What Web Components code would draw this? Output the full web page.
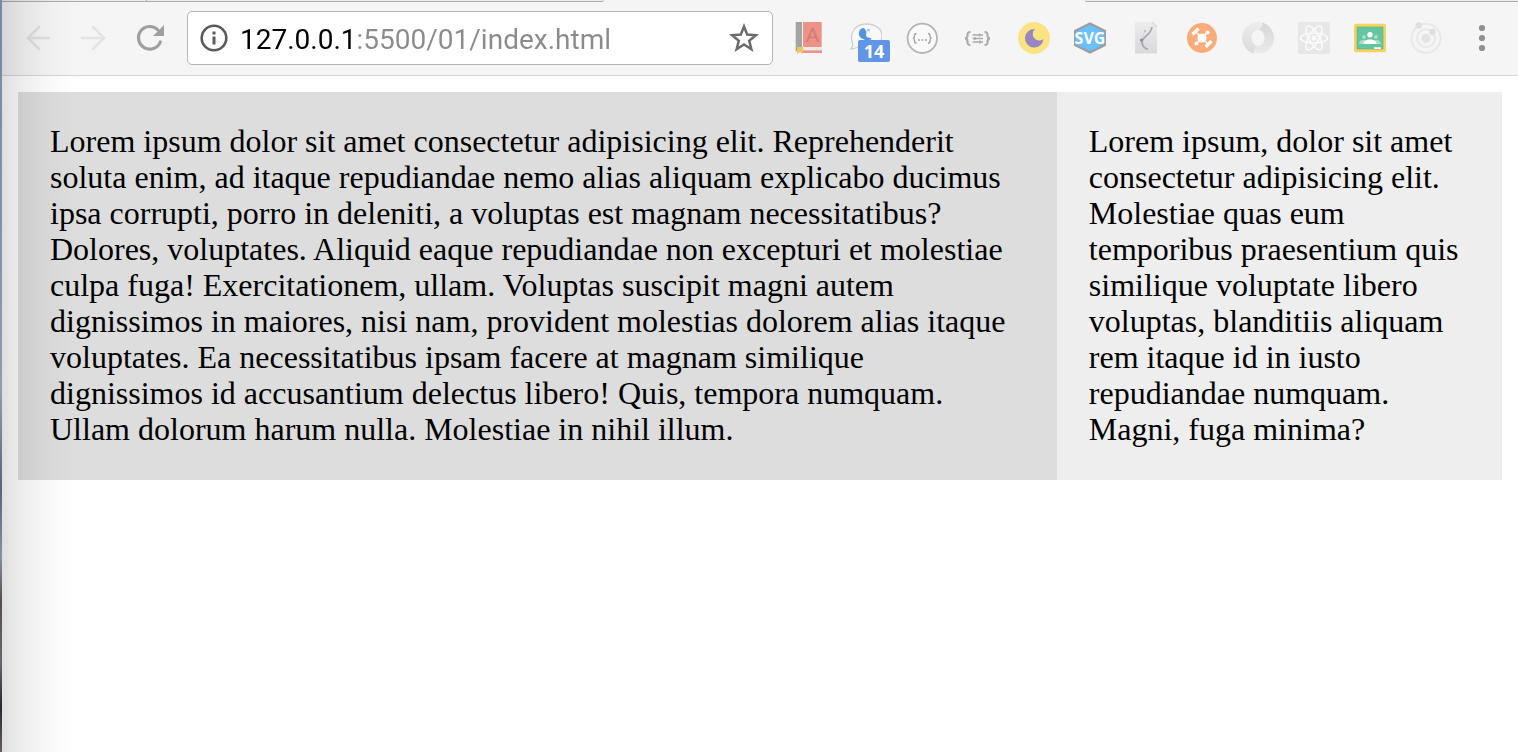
<!DOCTYPE html>
<html lang="en">
<head>
<meta charset="utf-8">
<meta name="viewport" content="width=device-width, initial-scale=1">
<title>127.0.0.1:5500/01/index.html</title>
<style>
  body { margin: 0; background: #fff; }
</style>
</head>
<body>
<browser-window>
  <tab-edge slot="tabs"></tab-edge>
  <browser-toolbar slot="toolbar">
    <tool-button slot="nav" label="Back"><svg viewBox="0 0 32 32"><path d="M27 16H7M17 5L6 16l11 11" fill="none" stroke="#e0e0e0" stroke-width="2.6" stroke-linecap="round"/></svg></tool-button>
    <tool-button slot="nav" label="Forward"><svg viewBox="0 0 32 32"><path d="M4 16h20M15 5l11 11-11 11" fill="none" stroke="#e4e4e4" stroke-width="2.6" stroke-linecap="round"/></svg></tool-button>
    <tool-button slot="nav" label="Reload"><svg viewBox="0 0 32 32"><path d="M26.300 20A11.300 11.300 0 1 1 24 8" fill="none" stroke="#9f9f9f" stroke-width="3.200" stroke-linecap="round"/><path d="M30 3v11H19z" fill="#9f9f9f"/></svg></tool-button>
    <address-bar slot="address" value="127.0.0.1:5500/01/index.html"></address-bar>

    <tool-button label="Dictionary"><svg viewBox="0 0 32 32"><path d="M9 0h18.700v25H9z" fill="#ee9186"/><path d="M1.700 0H8v25l-6.300 5z" fill="#a3a3a3"/><path d="M8 25h20v3H8z" fill="#e9eaec"/><path d="M7 28.300h21V31H7z" fill="#ee9186"/><path d="M3 25h6v7l-3-2-3 2z" fill="#f0c55b"/><text x="18.500" y="20" text-anchor="middle" font-family="Liberation Sans, sans-serif" font-size="20" fill="#cf7d76">A</text></svg></tool-button>
    <tool-button label="Messages" badge="14"><svg viewBox="0 0 32 32"><path d="M1 27c2-2 2-4 1.500-6C-1 11 5 2 16 2s16 6 16 12-6 12-15 12c-4 0-6-1-9-1-2 1-4 2-7 2z" fill="#f8f8f8" stroke="#cfcfcf" stroke-width="1.300"/><path d="M13 6c-5 1-6 9 0 11 2 1 4 2 5 4l1-3c2 0 3-1 2-2-3 0-5-1-5-3s1-3 0-4-1-3-3-3z" fill="#5294df"/><circle cx="18.500" cy="8" r="1.600" fill="#a9c7ea"/></svg></tool-button>
    <tool-button label="JSON formatter"><svg viewBox="0 0 32 32"><circle cx="16.300" cy="16.300" r="14.700" fill="#fafafa" stroke="#b4b4b4" stroke-width="1.800"/><path d="M10.500 11.500c-2 0-2 1-2 2.500s0 2-1.500 2.300c1.500.3 1.500 1 1.500 2.500s0 2.500 2 2.500M22 11.500c2 0 2 1 2 2.500s0 2 1.500 2.300c-1.500.3-1.500 1-1.500 2.500s0 2.500-2 2.500" fill="none" stroke="#a6a6a6" stroke-width="1.400"/><path d="M12 18h2M15.500 18h2M19 18h2" stroke="#a6a6a6" stroke-width="1.700"/></svg></tool-button>
    <tool-button label="JSON editor"><svg viewBox="0 0 32 32"><path d="M8.500 10c-3 0-3 1-3 3s0 3.300-2.500 3.300C5.500 16.300 5.500 18 5.500 20s0 3 3 3M22.500 10c3 0 3 1 3 3s0 3.300 2.500 3.300c-2.500 0-2.500 1.700-2.500 3.700s0 3-3 3" fill="none" stroke="#ababab" stroke-width="2.200"/><path d="M10.500 13h10.500M10.500 16.500h10.500M10.500 20h10.500" stroke="#ababab" stroke-width="1.500"/><path d="M17.500 11.500v3M13 15v3M18 18.500v3" stroke="#ababab" stroke-width="1.500"/></svg></tool-button>
    <tool-button label="Night mode"><svg viewBox="0 0 32 32"><circle cx="16" cy="16" r="16" fill="#fbe384"/><path d="M17 7A9.300 9.300 0 1 0 25.500 17 6 6 0 1 1 17 7z" fill="#9588c0"/></svg></tool-button>
    <tool-button label="SVG tools"><svg viewBox="0 0 32 32"><path d="M16 1.500L31 9v14L16 30.500 1 23V9z" fill="#68c1fb" stroke="#9d9d9d" stroke-width="2.400"/><path d="M1 9v14M31 9v14" stroke="#8ca5b5" stroke-width="1.500"/><text x="16" y="22" text-anchor="middle" font-family="Open Sans, sans-serif" font-weight="700" font-size="16" fill="#fff">SVG</text></svg></tool-button>
    <tool-button label="Vector editor"><svg viewBox="0 0 32 32"><defs><linearGradient id="sheet" x1="0" y1="0" x2="0" y2="1"><stop offset="0" stop-color="#ececee"/><stop offset="1" stop-color="#dad8dd"/></linearGradient></defs><path d="M5 0h18l4 4v27.500H5z" fill="url(#sheet)"/><path d="M22 0c2 2 1 5 5 4z" fill="#f7f7f7" stroke="#cfcfd2" stroke-width=".7"/><path d="M22 5c-1 8-10 10-10 15 0 4 3 7 6 7" fill="none" stroke="#aaa8aa" stroke-width="1.800"/><path d="M10 21l5-12" stroke="#cbd0dd" stroke-width=".8"/><circle cx="15" cy="9" r="1" fill="#9fb8df"/><circle cx="11.500" cy="18" r="1.600" fill="#908d90"/></svg></tool-button>
    <tool-button label="Drone"><svg viewBox="0 0 32 32"><circle cx="16" cy="16" r="15" fill="#f9ab79"/><path d="M9 9l14 14M21.500 10.500l-11 11" stroke="#fff" stroke-width="1.500"/><circle cx="16" cy="16" r="4.600" fill="#fff"/><path d="M6.500 12.500l6-6M19.500 25l6-6" stroke="#fff" stroke-width="3.400"/><circle cx="21.500" cy="10.500" r="2" fill="#fff"/><circle cx="10.500" cy="21.500" r="2" fill="#fff"/></svg></tool-button>
    <tool-button label="JSON viewer"><svg viewBox="0 0 32 32"><defs><linearGradient id="ringA" x1="0" y1="0" x2="0" y2="1"><stop offset="0" stop-color="#ededed"/><stop offset="1" stop-color="#dadada"/></linearGradient><linearGradient id="ringB" x1="0" y1="0" x2="0" y2="1"><stop offset="0" stop-color="#d6d6d6"/><stop offset="1" stop-color="#ebebeb"/></linearGradient></defs><path d="M12 31.500A16 16 0 0 1 16 0q4 1 4 5-1 3-4 3a6.500 8 0 0 0 0 16q-5 2-4 7.500z" fill="url(#ringA)"/><path d="M20 .5A16 16 0 0 1 16 32q-4-1-4-5 1-3 4-3a6.500 8 0 0 0 0-16q5-2 4-7.500z" fill="url(#ringB)"/></svg></tool-button>
    <tool-button label="React developer tools"><svg viewBox="0 0 32 32"><rect width="32" height="32" rx="2" fill="#e7e7e7"/><g fill="none" stroke="#fafafa" stroke-width="1.700"><ellipse cx="16" cy="16" rx="13.500" ry="5"/><ellipse cx="16" cy="16" rx="13.500" ry="5" transform="rotate(60 16 16)"/><ellipse cx="16" cy="16" rx="13.500" ry="5" transform="rotate(120 16 16)"/></g><circle cx="16" cy="16" r="2.500" fill="#fafafa"/></svg></tool-button>
    <tool-button label="Classroom"><svg viewBox="0 0 32 32"><rect y="1.700" width="32" height="28.600" rx="2" fill="#f8d15f"/><path d="M3 5h26v22H3z" fill="#63c6a0"/><path d="M3 5h26v22H3z" fill="none" stroke="#5cb28d" stroke-width=".6"/><circle cx="16" cy="12.700" r="2.700" fill="#fff"/><circle cx="10" cy="15" r="1.900" fill="#a9dfc9"/><circle cx="22" cy="15" r="1.900" fill="#a9dfc9"/><path d="M5 22c0-3 2-4 5-4h12c3 0 5 1 5 4z" fill="#a9dfc9"/><path d="M9.500 22c0-3 3-4.500 6.500-4.500s6.500 1.500 6.500 4.500z" fill="#fff"/><path d="M20 25.300h7V27h-7z" fill="#fff"/></svg></tool-button>
    <tool-button label="Orbit"><svg viewBox="0 0 32 32"><g fill="none" stroke="#e8e8e8" stroke-width="2"><circle cx="16" cy="16.300" r="14.500"/><circle cx="16" cy="16.300" r="9"/></g><circle cx="16" cy="16.300" r="4.500" fill="#e3e3e3"/><circle cx="8.700" cy="3.500" r="3.200" fill="#dfdfdf"/><circle cx="22.500" cy="10" r="3.200" fill="#dfdfdf"/></svg></tool-button>
    <tool-button label="Menu"><svg viewBox="0 0 32 32" fill="#909090"><circle cx="16" cy="6" r="3.100"/><circle cx="16" cy="16" r="3.100"/><circle cx="16" cy="26" r="3.100"/></svg></tool-button>
  </browser-toolbar>

  <split-layout>
    <text-panel>Lorem ipsum dolor sit amet consectetur adipisicing elit. Reprehenderit soluta enim, ad itaque repudiandae nemo alias aliquam explicabo ducimus ipsa corrupti, porro in deleniti, a voluptas est magnam necessitatibus? Dolores, voluptates. Aliquid eaque repudiandae non excepturi et molestiae culpa fuga! Exercitationem, ullam. Voluptas suscipit magni autem dignissimos in maiores, nisi nam, provident molestias dolorem alias itaque voluptates. Ea necessitatibus ipsam facere at magnam similique dignissimos id accusantium delectus libero! Quis, tempora numquam. Ullam dolorum harum nulla. Molestiae in nihil illum.</text-panel>
    <text-panel tone="light">Lorem ipsum, dolor sit amet consectetur adipisicing elit. Molestiae quas eum temporibus praesentium quis similique voluptate libero voluptas, blanditiis aliquam rem itaque id in iusto repudiandae numquam. Magni, fuga minima?</text-panel>
  </split-layout>
</browser-window>

<script>
  const shadow = (host, html) => { host.attachShadow({ mode: 'open' }).innerHTML = html; };

  customElements.define('browser-window', class extends HTMLElement {
    constructor() {
      super();
      shadow(this, `
        <style>
          :host { display: flex; min-height: 100vh; position: relative; background: #fff; }
          .desktop { flex: none; width: 2px; background: linear-gradient(#7288a3 0, #8495ab 35%, #909cab 52%, #5a6478 65%, #8790a0 74%, #574b50 80%, #69666f 88%, #2b2833 94%, #675c60 100%); }
          .window { flex: 1; min-width: 0; display: flex; flex-direction: column; position: relative; }
          .window::after { content: ""; position: absolute; inset: 0 auto 0 0; width: 76px; pointer-events: none;
            background: linear-gradient(90deg, rgba(0,0,0,.13), rgba(0,0,0,.08) 22%, rgba(0,0,0,.03) 55%, rgba(0,0,0,.01) 80%, transparent); }
          main { padding: 16px; }
        </style>
        <div class="desktop"></div>
        <div class="window">
          <slot name="tabs"></slot>
          <slot name="toolbar"></slot>
          <main><slot></slot></main>
        </div>`);
    }
  });

  customElements.define('tab-edge', class extends HTMLElement {
    constructor() {
      super();
      shadow(this, `
        <style>
          :host { display: flex; height: 2px; background: #f5f5f5; }
          i { box-sizing: border-box; background: #ececec; border-bottom: 1px solid #acacac; }
          .first { flex: 144; border-right: 1px solid #acacac; }
          .second { flex: 457; border-bottom-right-radius: 2px; }
          .active { flex: 482; background: none; border: 0; }
          .rest { flex: 433; border-bottom-left-radius: 2px; }
        </style>
        <i class="first"></i><i class="second"></i><i class="active"></i><i class="rest"></i>`);
    }
  });

  customElements.define('browser-toolbar', class extends HTMLElement {
    constructor() {
      super();
      shadow(this, `
        <style>
          :host { display: flex; align-items: center; gap: 9px; box-sizing: border-box; height: 74px; padding: 0 8px 2px; background: #f5f5f5; border-bottom: 1px solid #d6d6d6; }
          nav, .tools { display: flex; flex: none; }
          .address { flex: 1; min-width: 0; }
        </style>
        <nav><slot name="nav"></slot></nav>
        <div class="address"><slot name="address"></slot></div>
        <div class="tools"><slot></slot></div>`);
    }
  });

  customElements.define('tool-button', class extends HTMLElement {
    constructor() {
      super();
      shadow(this, `
        <style>
          :host { display: block; width: 56px; }
          button { display: flex; justify-content: center; align-items: center; position: relative; width: 100%; height: 48px; margin: 0; padding: 0; border: 0; background: none; }
          ::slotted(svg) { display: block; width: 32px; height: 32px; }
          .badge { position: absolute; left: 20px; top: 26px; width: 32px; height: 22px; border-radius: 2px; background: #6095e7; color: #fff; font: 700 18px/22px "Open Sans", sans-serif; text-align: center; }
          .badge:empty { display: none; }
        </style>
        <button type="button"><slot></slot><span class="badge"></span></button>`);
    }
    connectedCallback() {
      this.shadowRoot.querySelector('button').setAttribute('aria-label', this.getAttribute('label'));
      this.shadowRoot.querySelector('.badge').textContent = this.getAttribute('badge') || '';
    }
  });

  customElements.define('address-bar', class extends HTMLElement {
    constructor() {
      super();
      shadow(this, `
        <style>
          :host { display: flex; align-items: center; box-sizing: border-box; height: 54px; padding: 0 12px; gap: 12px; border: 1px solid #b4b4b4; border-radius: 5px; background: #fff; }
          svg { display: block; flex: none; }
          button { flex: none; padding: 0; border: 0; background: none; }
          /* host name in black, the rest of the address in grey */
          input { flex: 1; min-width: 0; box-sizing: border-box; height: 44px; padding: 4px 0 0; border: 0; outline: 0; color: #000; font: 28px/40px Roboto, sans-serif;
            background: linear-gradient(90deg, #000 115px, #8b8b8b 115px); -webkit-background-clip: text; background-clip: text; -webkit-text-fill-color: transparent; }
        </style>
        <button type="button" aria-label="View site information"><svg width="28" height="28" viewBox="0 0 28 28"><circle cx="14" cy="14" r="12.300" fill="none" stroke="#5a5a5a" stroke-width="2.600"/><path d="M12.500 12.500h3v8h-3zM12.500 7.500h3v3h-3z" fill="#5a5a5a"/></svg></button>
        <input type="text" aria-label="Address" spellcheck="false">
        <button type="button" aria-label="Bookmark this page"><svg width="32" height="32" viewBox="0 0 32 32"><path d="M16 4.500l3.200 8.100 8.700.6-6.700 5.500 2.200 8.500L16 22.500l-7.400 4.700 2.200-8.500-6.700-5.500 8.700-.6z" fill="none" stroke="#6b6b6b" stroke-width="2.500"/></svg></button>`);
    }
    connectedCallback() { this.shadowRoot.querySelector('input').value = this.getAttribute('value'); }
  });

  customElements.define('split-layout', class extends HTMLElement {
    constructor() {
      super();
      shadow(this, `
        <style>:host { display: grid; grid-template-columns: 70% 30%; }</style>
        <slot></slot>`);
    }
  });

  customElements.define('text-panel', class extends HTMLElement {
    constructor() {
      super();
      shadow(this, `
        <style>
          :host { display: block; padding: 31px 32px 33px; background: #ddd; color: #000; font: 32px/36px "Liberation Serif", serif; }
          :host([tone="light"]) { background: #eee; }
        </style>
        <slot></slot>`);
    }
  });
</script>
</body>
</html>
